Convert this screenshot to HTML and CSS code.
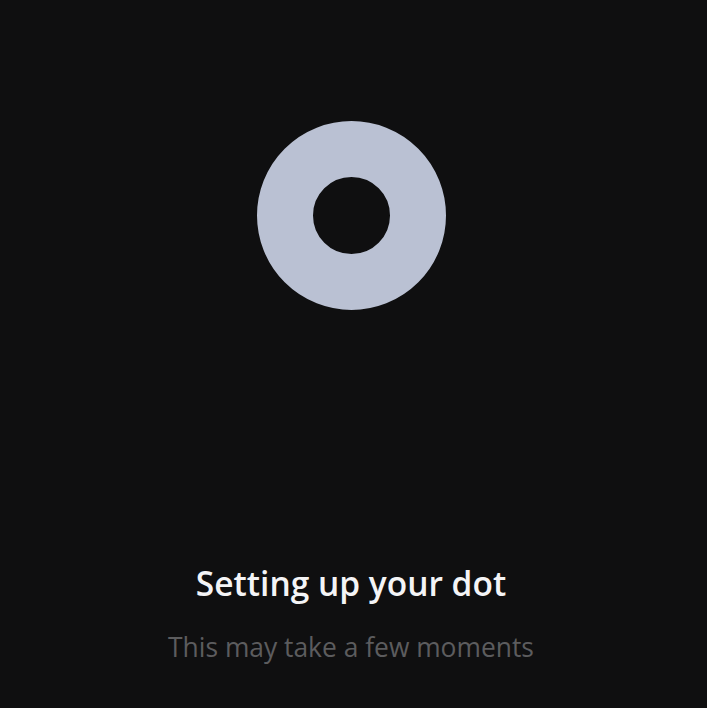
FILE: index.html
```html
<!DOCTYPE html>
<html lang="en">
<head>
<meta charset="utf-8">
<title>Setting up your dot</title>
<link rel="stylesheet" href="styles.css">
</head>
<body>
<main class="screen">
  <div class="ring" aria-hidden="true"></div>
  <div class="caption">
    <h1 class="title">Setting up your dot</h1>
    <p class="subtitle">This may take a few moments</p>
  </div>
</main>
</body>
</html>
```

FILE: styles.css
```css
html, body {
  margin: 0;
  padding: 0;
  background: #0f0f10;
}

.screen {
  height: 708px;
  display: flex;
  flex-direction: column;
  align-items: center;
  box-sizing: border-box;
  padding-top: 121px;
  padding-right: 5px;
  font-family: "Open Sans", "Noto Sans", sans-serif;
}

.ring {
  width: 189px;
  height: 189px;
  border-radius: 50%;
  box-sizing: border-box;
  border: 56px solid #bac1d3;
}

.caption {
  margin-top: auto;
  padding-bottom: 44px;
  display: flex;
  flex-direction: column;
  align-items: center;
}

.title {
  margin: 0;
  font-size: 33.5px;
  font-weight: 600;
  color: #f4f4f6;
  line-height: 40px;
}

.subtitle {
  margin: 27px 0 0;
  font-size: 26.4px;
  font-weight: 400;
  color: #5c5c5e;
  line-height: 34px;
}
```
